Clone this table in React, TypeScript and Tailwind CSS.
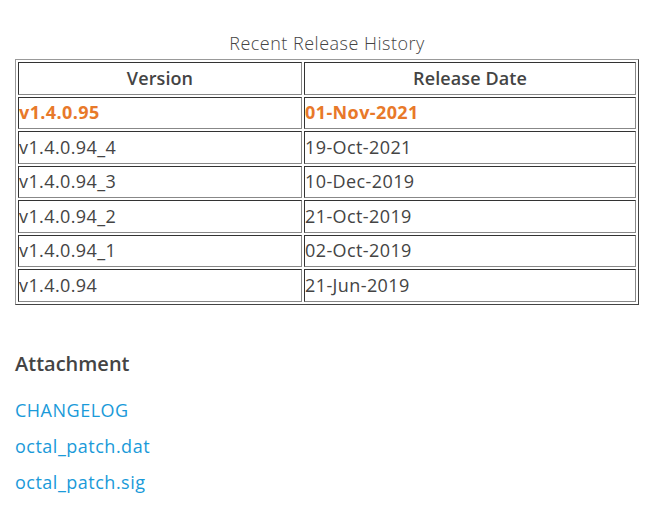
export default function App() {
  const releases = [
    { version: "v1.4.0.95", date: "01-Nov-2021", latest: true },
    { version: "v1.4.0.94_4", date: "19-Oct-2021" },
    { version: "v1.4.0.94_3", date: "10-Dec-2019" },
    { version: "v1.4.0.94_2", date: "21-Oct-2019" },
    { version: "v1.4.0.94_1", date: "02-Oct-2019" },
    { version: "v1.4.0.94", date: "21-Jun-2019" },
  ];

  const files = ["CHANGELOG", "octal_patch.dat", "octal_patch.sig"];

  const cell =
    "h-[32.5px] p-0 border border-t-[#333] border-l-[#333] border-b-[#888] border-r-[#888] align-middle";

  return (
    <div className="min-h-[530px] bg-white px-[15px] pt-[31px] text-[#444] font-['Open_Sans',sans-serif]">
      <table className="w-[624px] border-separate border-spacing-[2px] border border-t-[#999] border-l-[#999] border-b-[#444] border-r-[#444]">
        <caption className="text-[18px] leading-[24px] font-light tracking-[0.5px] text-[#444] pb-[4px]">
          Recent Release History
        </caption>
        <thead>
          <tr>
            <th className={`${cell} w-[284px] text-center font-semibold text-[18px] tracking-[0.1px]`}>Version</th>
            <th className={`${cell} text-center font-semibold text-[18px] tracking-[0.1px]`}>Release Date</th>
          </tr>
        </thead>
        <tbody>
          {releases.map((r) => (
            <tr key={r.version} className={r.latest ? "text-[#e8792a] font-bold" : ""}>
              <td className={`${cell} text-left text-[18px] tracking-[0.4px]`}>{r.version}</td>
              <td className={`${cell} text-left text-[18px] tracking-[0.4px]`}>{r.date}</td>
            </tr>
          ))}
        </tbody>
      </table>

      <h3 className="mt-[45px] text-[20px] leading-[28px] font-semibold text-[#444]">Attachment</h3>
      <ul className="mt-[20px] flex flex-col gap-[11px]">
        {files.map((f) => (
          <li key={f}>
            <a href="#" className="text-[18px] leading-[25px] tracking-[0.5px] text-[#1a9ad9]">
              {f}
            </a>
          </li>
        ))}
      </ul>
    </div>
  );
}
